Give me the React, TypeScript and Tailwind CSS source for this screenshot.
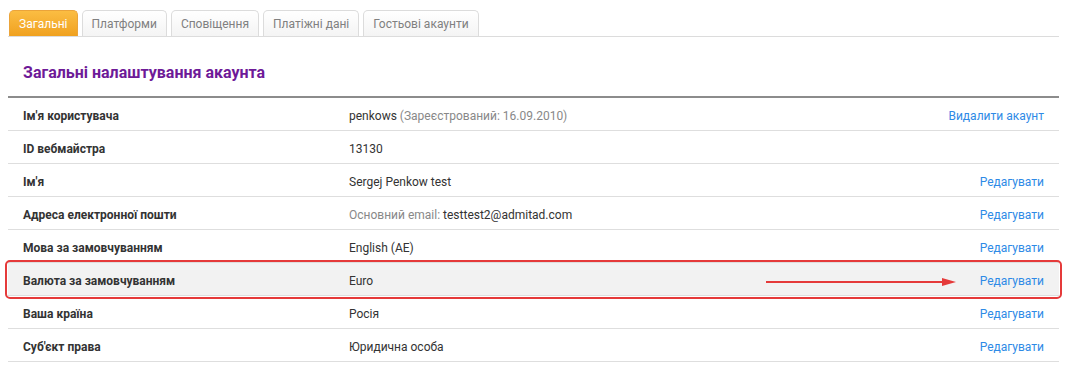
import React from 'react';

const tabs = ['Загальні', 'Платформи', 'Сповіщення', 'Платіжні дані', 'Гостьові акаунти'];

interface Row {
  label: string;
  value: React.ReactNode;
  action?: string;
  highlight?: boolean;
}

const rows: Row[] = [
  {
    label: "Ім'я користувача",
    value: (
      <>
        penkows <span className="text-[#888]">(Зареєстрований: 16.09.2010)</span>
      </>
    ),
    action: 'Видалити акаунт',
  },
  { label: 'ID вебмайстра', value: '13130' },
  { label: "Ім'я", value: 'Sergej Penkow test', action: 'Редагувати' },
  {
    label: 'Адреса електронної пошти',
    value: (
      <>
        <span className="text-[#888]">Основний email:</span> testtest2@admitad.com
      </>
    ),
    action: 'Редагувати',
  },
  { label: 'Мова за замовчуванням', value: 'English (AE)', action: 'Редагувати' },
  { label: 'Валюта за замовчуванням', value: 'Euro', action: 'Редагувати', highlight: true },
  { label: 'Ваша країна', value: 'Росія', action: 'Редагувати' },
  { label: "Суб'єкт права", value: 'Юридична особа', action: 'Редагувати' },
];

export default function App() {
  return (
    <div
      className="bg-white w-[1069px] h-[367px] overflow-hidden pl-[8px] pr-[10px] pt-[10px] text-[12px] text-[#333]"
      style={{ fontFamily: 'Roboto, "Liberation Sans", sans-serif' }}
    >
      {/* tabs */}
      <div className="flex gap-[4px] border-b border-[#dcdcdc] pl-[1px]">
        {tabs.map((t, i) =>
          i === 0 ? (
            <div
              key={t}
              className="h-[26px] px-[9px] pt-[1px] flex items-center rounded-t-[5px] text-white bg-gradient-to-b from-[#fbbd42] to-[#f0a11e] border border-[#eba43a] border-b-0"
            >
              {t}
            </div>
          ) : (
            <div
              key={t}
              className="h-[26px] px-[9px] pt-[1px] flex items-center rounded-t-[5px] text-[#808080] bg-gradient-to-b from-white to-[#f4f4f4] border border-[#dcdcdc] border-b-0"
            >
              {t}
            </div>
          )
        )}
      </div>

      {/* title */}
      <div className="pl-[15px] pt-[26px] pb-[13px] border-b-2 border-[#8c8c8c]">
        <h1 className="text-[16px] leading-[20px] font-bold text-[#6e1a98]">Загальні налаштування акаунта</h1>
      </div>

      {/* rows */}
      <div>
        {rows.map((r) => (
          <div
            key={r.label}
            className={`relative flex items-center h-[33px] pt-[4px] border-b border-[#dedede] px-[15px] ${r.highlight ? 'bg-[#f2f2f2]' : ''}`}
          >
            <div className="w-[326px] font-bold">{r.label}</div>
            <div className="flex-1">{r.value}</div>
            {r.action && <a className="text-[#2e8ae6] cursor-pointer">{r.action}</a>}
            {r.highlight && (
              <>
                <div className="absolute -left-[3px] -right-[3px] -top-[3px] -bottom-[4px] border-2 border-[#e53a3a] rounded-[5px] pointer-events-none" />
                <svg className="absolute left-[758px] top-[15px]" width="190" height="8" viewBox="0 0 190 8">
                  <line x1="0" y1="4" x2="180" y2="4" stroke="#e53a3a" strokeWidth="2" />
                  <polygon points="176,0 190,4 176,8" fill="#e53a3a" />
                </svg>
              </>
            )}
          </div>
        ))}
      </div>
    </div>
  );
}
